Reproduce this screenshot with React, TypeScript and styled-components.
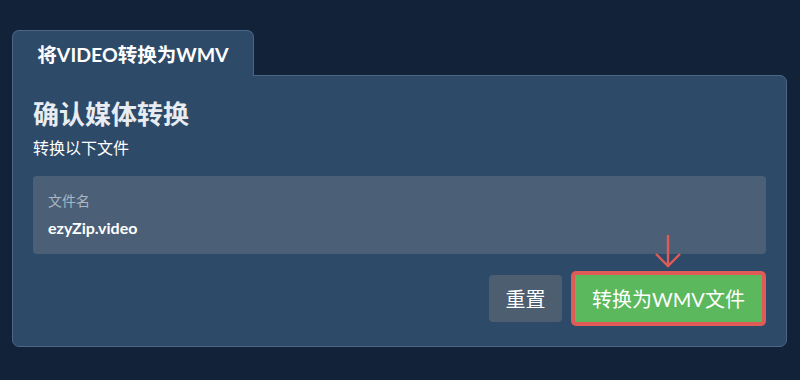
import styled, { createGlobalStyle } from "styled-components";

const GlobalStyle = createGlobalStyle`
    html, body {
        margin: 0;
        padding: 0;
        background: #112239;
        font-family: Lato, "Noto Sans CJK SC", sans-serif;
    }
`;

const Page = styled.div`
    width: 800px;
    height: 380px;
    padding: 30px 13px 0 12px;
    box-sizing: border-box;
`;

const Tabs = styled.div`
    display: flex;
`;

const Tab = styled.div`
    height: 46px;
    width: 242px;
    display: flex;
    align-items: center;
    justify-content: center;
    background: #2d4a69;
    border: 1px solid #4d6686;
    border-bottom: none;
    border-radius: 7px 7px 0 0;
    color: #ffffff;
    font-size: 19.5px;
    font-weight: 700;
    box-sizing: border-box;
    margin-bottom: -1px;
    position: relative;
    z-index: 1;
`;

const Panel = styled.div`
    background: #2d4a69;
    border: 1px solid #4d6686;
    border-radius: 0 7px 7px 7px;
    padding: 20px 20px 21px 20px;
    box-sizing: border-box;
    height: 272px;
`;

const Title = styled.h2`
    margin: 0;
    color: #e8ecf0;
    font-size: 26px;
    font-weight: 700;
    line-height: 36px;
`;

const Subtitle = styled.div`
    margin-top: 6px;
    color: #ffffff;
    font-size: 16px;
    line-height: 20px;
`;

const FileBox = styled.div`
    margin-top: 18px;
    height: 78px;
    background: #4b6077;
    border-radius: 4px;
    padding: 15px 15px;
    box-sizing: border-box;
    display: flex;
    flex-direction: column;
    gap: 7px;
`;

const Label = styled.div`
    color: #aab6c3;
    font-size: 14px;
    line-height: 20px;
`;

const Value = styled.div`
    color: #ffffff;
    font-size: 16px;
    font-weight: 700;
    line-height: 20px;
`;

const Actions = styled.div`
    display: flex;
    justify-content: flex-end;
    align-items: center;
    gap: 9px;
    margin-top: 17px;
`;

const ResetButton = styled.button`
    height: 47px;
    width: 73px;
    border: none;
    border-radius: 4px;
    background: #4d5e70;
    color: #ffffff;
    font-family: inherit;
    font-size: 20px;
`;

const ConvertWrap = styled.div`
    position: relative;
`;

const ConvertButton = styled.button`
    height: 55px;
    width: 195px;
    border: 4px solid #de5b57;
    border-radius: 5px;
    background: #5cb85c;
    color: #ffffff;
    font-family: inherit;
    font-size: 20px;
    box-sizing: border-box;
    padding: 0;
`;

const Arrow = styled.svg`
    position: absolute;
    left: 83px;
    top: -37px;
`;

export default function App() {
    return (
        <>
            <GlobalStyle />
            <Page>
                <Tabs>
                    <Tab>将VIDEO转换为WMV</Tab>
                </Tabs>
                <Panel>
                    <Title>确认媒体转换</Title>
                    <Subtitle>转换以下文件</Subtitle>
                    <FileBox>
                        <Label>文件名</Label>
                        <Value>ezyZip.video</Value>
                    </FileBox>
                    <Actions>
                        <ResetButton>重置</ResetButton>
                        <ConvertWrap>
                            <Arrow width="28" height="36" viewBox="0 0 28 36">
                                <path
                                    d="M14 1 V33 M2 20 L14 32 L26 20"
                                    fill="none"
                                    stroke="#de5b57"
                                    strokeWidth="2.4"
                                />
                            </Arrow>
                            <ConvertButton>转换为WMV文件</ConvertButton>
                        </ConvertWrap>
                    </Actions>
                </Panel>
            </Page>
        </>
    );
}
